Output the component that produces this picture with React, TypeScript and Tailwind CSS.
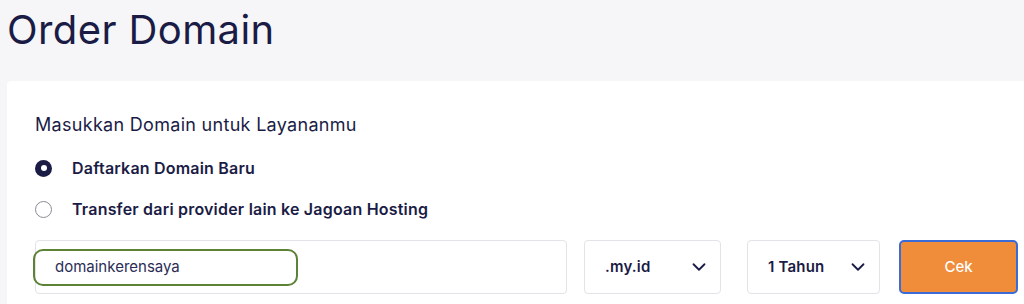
import { ChevronDown } from 'lucide-react';

const font = { fontFamily: 'Inter, "Noto Sans", sans-serif' };

function Radio({ checked, label }: { checked: boolean; label: string }) {
  return (
    <label className="flex items-center gap-[20px] h-[24px]">
      {checked ? (
        <span className="w-[17px] h-[17px] rounded-full bg-[#1b1c45] flex items-center justify-center">
          <span className="w-[6px] h-[6px] rounded-full bg-white" />
        </span>
      ) : (
        <span className="w-[17px] h-[17px] rounded-full border border-[#8a8a95] bg-white" />
      )}
      <span className="text-[16px] font-semibold text-[#1b1c45] tracking-[0.2px]">{label}</span>
    </label>
  );
}

function Select({ value, width }: { value: string; width: string }) {
  return (
    <div
      className={`${width} h-[54px] flex items-center justify-between pl-[20px] pr-[10px] border border-[#e3e3e8] rounded-[4px] bg-white`}
    >
      <span className="text-[15px] font-semibold text-[#1b1c45] tracking-[0.2px]">{value}</span>
      <ChevronDown className="w-[22px] h-[22px] text-[#1b1c45]" strokeWidth={2} />
    </div>
  );
}

export default function App() {
  return (
    <div className="w-[1024px] h-[304px] overflow-hidden bg-[#f6f6f9]" style={font}>
      <h1 className="pl-[7px] pt-[6px] h-[81px] text-[40px] leading-[48px] font-normal text-[#1b1c45] tracking-[0.4px]">
        Order Domain
      </h1>
      <div className="ml-[7px] w-[1040px] h-[260px] bg-white rounded-[4px] pl-[28px] pt-[30px]">
        <h2 className="text-[18px] leading-[28px] text-[#1b1c45] tracking-[0.3px]">
          Masukkan Domain untuk Layananmu
        </h2>
        <div className="mt-[17px] flex flex-col gap-[17px]">
          <Radio checked label="Daftarkan Domain Baru" />
          <Radio checked={false} label="Transfer dari provider lain ke Jagoan Hosting" />
        </div>
        <div className="mt-[19px] flex items-center">
          <div className="w-[532px] h-[54px] border border-[#e3e3e8] rounded-[4px] bg-white flex items-center">
            <div className="-ml-[3px] w-[265px] h-[37px] border-2 border-[#5c8236] rounded-[10px] flex items-center pl-[20px]">
              <span className="text-[15px] text-[#2b2d55]">domainkerensaya</span>
            </div>
          </div>
          <div className="ml-[17px]">
            <Select value=".my.id" width="w-[137px]" />
          </div>
          <div className="ml-[26px]">
            <Select value="1 Tahun" width="w-[133px]" />
          </div>
          <button className="ml-[19px] w-[119px] h-[54px] rounded-[5px] bg-[#ef8d3a] border-2 border-[#3b6bd6] text-white text-[15px] font-medium">
            Cek
          </button>
        </div>
      </div>
    </div>
  );
}
